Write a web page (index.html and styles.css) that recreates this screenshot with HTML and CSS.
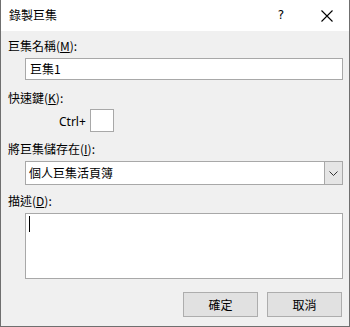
FILE: index.html
```html
<!DOCTYPE html>
<html lang="zh-Hant">
<head>
<meta charset="utf-8">
<title>錄製巨集</title>
<link rel="stylesheet" href="styles.css">
</head>
<body>
<div class="window">
  <div class="titlebar">
    <div class="title">錄製巨集</div>
    <div class="tb-btn help">?</div>
    <div class="tb-btn close">
      <svg width="12" height="12" viewBox="0 0 12 12"><path d="M0.5 0.5 L11.5 11.5 M11.5 0.5 L0.5 11.5" stroke="#000" stroke-width="1.1" fill="none"/></svg>
    </div>
  </div>
  <div class="content">
    <div class="label">巨集名稱(<u>M</u>):</div>
    <div class="field name-field">巨集1</div>

    <div class="label gap-k">快速鍵(<u>K</u>):</div>
    <div class="shortcut-row">
      <span class="ctrl">Ctrl+</span>
      <div class="keybox"></div>
    </div>

    <div class="label gap-i">將巨集儲存在(<u>I</u>):</div>
    <div class="combo">
      <div class="combo-text">個人巨集活頁簿</div>
      <div class="combo-btn">
        <svg width="9" height="5" viewBox="0 0 9 5"><path d="M0.5 0.5 L4.5 4.5 L8.5 0.5" stroke="#333" stroke-width="1" fill="none"/></svg>
      </div>
    </div>

    <div class="label gap-d">描述(<u>D</u>):</div>
    <div class="textarea"><div class="caret"></div></div>

    <div class="buttons">
      <div class="btn">確定</div>
      <div class="btn">取消</div>
    </div>
  </div>
</div>
</body>
</html>
```
FILE: styles.css
```css
* { box-sizing: border-box; }
html, body { margin: 0; padding: 0; background: #f0f0f0; }
body {
  font-family: "Noto Sans CJK TC", "Noto Sans", sans-serif;
  font-size: 12px;
  color: #000;
}
.window {
  width: 350px;
  height: 327px;
  border: 1px solid #6f6f6f;
  border-top: none;
  background: #f0f0f0;
  display: flex;
  flex-direction: column;
}
.titlebar {
  height: 31px;
  background: #fff;
  display: flex;
  align-items: center;
  flex-shrink: 0;
}
.title {
  flex: 1;
  padding-left: 8px;
  font-size: 12px;
  line-height: 16px;
  padding-bottom: 1px;
}
.tb-btn {
  width: 46px;
  height: 31px;
  display: flex;
  align-items: center;
  justify-content: center;
}
.help {
  font-family: "DejaVu Sans", sans-serif;
  font-size: 12px;
  width: 44px;
  padding-bottom: 1px;
}
.close svg { margin-left: 1px; }
.content {
  padding: 7px 6px 0 7px;
  display: flex;
  flex-direction: column;
}
.label {
  line-height: 16px;
  height: 16px;
}
.label u { text-underline-offset: 1px; }
.field {
  margin: 4px 0 0 17px;
  height: 22px;
  background: #fff;
  border: 1px solid #a8a8a8;
  padding-left: 4px;
  line-height: 19px;
}
.gap-k { margin-top: 10px; }
.shortcut-row {
  margin-top: 3px;
  display: flex;
  align-items: center;
  padding-left: 51px;
  height: 23px;
}
.ctrl {
  font-family: "Noto Sans", sans-serif;
  font-size: 12px;
  width: 31px;
  padding-top: 1px;
}
.keybox {
  width: 24px;
  height: 23px;
  background: #fff;
  border: 1px solid #a8a8a8;
}
.gap-i { margin-top: 9px; }
.combo {
  margin: 4px 0 0 17px;
  height: 24px;
  background: #fff;
  border: 1px solid #a8a8a8;
  display: flex;
}
.combo-text {
  flex: 1;
  padding-left: 3px;
  line-height: 21px;
}
.combo-btn {
  width: 18px;
  background: #e5e5e5;
  border-left: 1px solid #a8a8a8;
  display: flex;
  align-items: center;
  justify-content: center;
}
.gap-d { margin-top: 8px; }
.textarea {
  margin: 4px 0 0 17px;
  height: 66px;
  background: #fff;
  border: 1px solid #a8a8a8;
  padding: 2px 0 0 3px;
}
.caret {
  width: 1px;
  height: 16px;
  background: #000;
}
.buttons {
  margin-top: 13px;
  margin-right: 1px;
  display: flex;
  justify-content: flex-end;
  gap: 9px;
}
.btn {
  width: 75px;
  height: 25px;
  background: #e1e1e1;
  border: 1px solid #adadad;
  display: flex;
  align-items: center;
  justify-content: center;
  line-height: 16px;
}
```
